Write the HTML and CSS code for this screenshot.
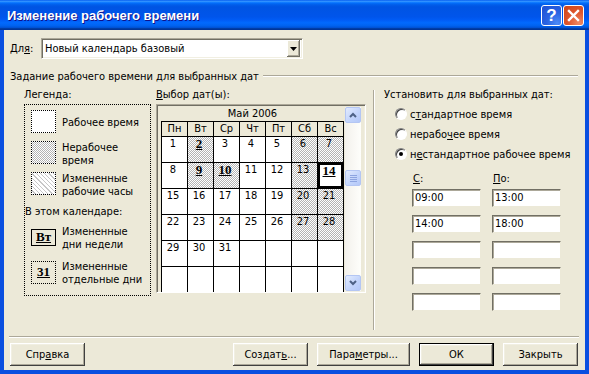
FILE: index.html
```html
<!DOCTYPE html>
<html lang="ru">
<head>
    <meta charset="UTF-8">
    <title>Изменение рабочего времени</title>
    <link rel="stylesheet" href="styles.css">
</head>
<body>
<div class="window">
    <div class="titlebar">
        <span class="title">Изменение рабочего времени</span>
        <span class="tb-btn help">?</span>
        <span class="tb-btn close">
            <svg width="13" height="13" viewBox="0 0 13 13"><path d="M2 2 L11 11 M11 2 L2 11" stroke="#fff" stroke-width="2.4" stroke-linecap="square"/></svg>
        </span>
    </div>
    <div class="content">
        <div class="for-row">
            <span class="for-label">Дл<u>я</u>:</span>
            <div class="combo">
                <span class="combo-text">Новый календарь базовый</span>
                <span class="combo-btn"><svg width="7" height="4" viewBox="0 0 7 4"><path d="M0 0 H7 L3.5 4 Z" fill="#000"/></svg></span>
            </div>
        </div>

        <div class="group-title"><span>Задание рабочего времени для выбранных дат</span><i class="line"></i></div>

        <div class="main">
            <!-- легенда -->
            <div class="legend">
                <div class="cap">Легенда:</div>
                <div class="legend-box">
                    <div class="leg-item"><span class="sw"></span><span class="leg-text">Рабочее время</span></div>
                    <div class="leg-item"><span class="sw sw-off"></span><span class="leg-text">Нерабочее<br>время</span></div>
                    <div class="leg-item"><span class="sw sw-hatch"></span><span class="leg-text">Измененные<br>рабочие часы</span></div>
                    <div class="leg-note">В этом календаре:</div>
                    <div class="leg-item leg-wd"><span class="sw sw-day">Вт</span><span class="leg-text">Измененные<br>дни недели</span></div>
                    <div class="leg-item leg-dt"><span class="sw sw-date">31</span><span class="leg-text">Измененные<br>отдельные дни</span></div>
                </div>
            </div>

            <!-- календарь -->
            <div class="calendar">
                <div class="cap"><u>В</u>ыбор дат(ы):</div>
                <div class="cal-box">
                    <div class="cal-main">
                        <div class="cal-month">Май 2006</div>
                        <div class="cal-grid">
                            <span class="dow">Пн</span><span class="dow">Вт</span><span class="dow">Ср</span><span class="dow">Чт</span><span class="dow">Пт</span><span class="dow">Сб</span><span class="dow">Вс</span>

                            <span>1</span><span class="off b">2</span><span>3</span><span>4</span><span>5</span><span class="off">6</span><span class="off">7</span>
                            <span>8</span><span class="off b">9</span><span class="off b">10</span><span>11</span><span>12</span><span class="off">13</span><span class="sel b">14</span>
                            <span>15</span><span>16</span><span>17</span><span>18</span><span>19</span><span class="off">20</span><span class="off">21</span>
                            <span>22</span><span>23</span><span>24</span><span>25</span><span>26</span><span class="off">27</span><span class="off">28</span>
                            <span>29</span><span>30</span><span>31</span><span></span><span></span><span></span><span></span>
                            <span></span><span></span><span></span><span></span><span></span><span></span><span></span>
                        </div>
                    </div>
                    <div class="scroll">
                        <span class="sb-btn"><svg width="8" height="6" viewBox="0 0 8 6"><path d="M1 5 L4 2 L7 5" fill="none" stroke="#4d6185" stroke-width="2"/></svg></span>
                        <span class="sb-thumb"><i></i><i></i><i></i><i></i></span>
                        <span class="sb-space"></span>
                        <span class="sb-btn"><svg width="8" height="6" viewBox="0 0 8 6"><path d="M1 1 L4 4 L7 1" fill="none" stroke="#4d6185" stroke-width="2"/></svg></span>
                    </div>
                </div>
            </div>

            <div class="vsep"></div>

            <!-- установить -->
            <div class="setpanel">
                <div class="set-title">Установить для выбранных дат:</div>
                <div class="radios">
                    <div class="radio"><span class="rb"></span><span>с<u>т</u>андартное время</span></div>
                    <div class="radio"><span class="rb"></span><span>нерабо<u>ч</u>ее время</span></div>
                    <div class="radio"><span class="rb on"></span><span>н<u>е</u>стандартное рабочее время</span></div>
                </div>
                <div class="times-caps">
                    <span><u>С</u>:</span><span><u>П</u>о:</span>
                </div>
                <div class="times">
                    <span class="field">09:00</span><span class="field">13:00</span>
                    <span class="field">14:00</span><span class="field">18:00</span>
                    <span class="field"></span><span class="field"></span>
                    <span class="field"></span><span class="field"></span>
                    <span class="field"></span><span class="field"></span>
                </div>
            </div>
        </div>

        <div class="hsep"></div>

        <div class="buttons">
            <button class="btn">Спр<u>а</u>вка</button>
            <span class="spacer"></span>
            <button class="btn">Создат<u>ь</u>...</button>
            <button class="btn wide">Пара<u>м</u>етры...</button>
            <button class="btn default">ОК</button>
            <button class="btn">Закрыть</button>
        </div>
    </div>
</div>
</body>
</html>
```

FILE: styles.css
```css
* {
    padding: 0;
    margin: 0;
    box-sizing: border-box;
}

body {
    width: 589px;
    height: 374px;
    overflow: hidden;
    font-family: "DejaVu Sans", "Liberation Sans", sans-serif;
    font-stretch: condensed;
    font-size: 11px;
    color: #000;
    background: #fff;
}

u {
    text-decoration: underline;
    text-underline-offset: 1px;
}

.window {
    width: 589px;
    height: 374px;
    display: flex;
    flex-direction: column;
    background: #0a4fe0;
}

/* ---------------- заголовок */
.titlebar {
    height: 30px;
    display: flex;
    align-items: center;
    padding: 1px 5px 0 7px;
    background: linear-gradient(to bottom, #0058ee 0%, #3593ff 4%, #288eff 6%, #127dff 8%, #036ffc 10%, #0262ee 14%, #0057e5 20%, #0054e3 24%, #0055eb 56%, #005bf5 66%, #026afe 76%, #0062ef 86%, #0052d6 92%, #0040ab 94%, #003092 100%);
}

.title {
    flex: 1;
    color: #fff;
    font-family: "Liberation Sans", Arial, sans-serif;
    font-stretch: normal;
    font-weight: bold;
    font-size: 13px;
    text-shadow: 1px 1px #0f1089;
}

.tb-btn {
    width: 21px;
    height: 21px;
    border: 1px solid #fff;
    border-radius: 3px;
    display: flex;
    align-items: center;
    justify-content: center;
    margin-left: 1px;
}

.help {
    background: radial-gradient(circle at 80% 90%, #4d8bf7, #2a64e3 45%, #1d4fd2);
    color: #fff;
    font-family: "Liberation Sans", Arial, sans-serif;
    font-weight: bold;
    font-size: 17px;
}

.close {
    background: radial-gradient(circle at 80% 90%, #f08a64, #e0582f 45%, #cc4418);
}

/* ---------------- тело */
.content {
    flex: 1;
    margin: 0 4px 4px;
    background: #ece9d8;
    padding: 0 7px 0 6px;
    display: flex;
    flex-direction: column;
}

.for-row {
    display: flex;
    align-items: center;
    height: 21px;
    margin-top: 8px;
}

.for-label {
    width: 31px;
}

.combo {
    width: 262px;
    height: 21px;
    display: flex;
    align-items: center;
    background: #fff;
    border: 1px solid;
    border-color: #aca899 #fff #fff #aca899;
    box-shadow: inset 1px 1px #716f64, inset -1px -1px #f1efe2;
    padding: 2px;
}

.combo-text {
    flex: 1;
    padding-left: 1px;
}

.combo-btn {
    width: 13px;
    height: 17px;
    display: flex;
    align-items: center;
    justify-content: center;
    background: #ece9d8;
    box-shadow: inset -1px -1px #716f64, inset 1px 1px #fff, inset -2px -2px #aca899;
}

.group-title {
    display: flex;
    align-items: center;
    height: 14px;
    margin-top: 10px;
}

.group-title .line {
    flex: 1;
    height: 2px;
    margin-left: 4px;
    border-top: 1px solid #aca899;
    border-bottom: 1px solid #fff;
}

.main {
    flex: 1;
    display: flex;
    padding-top: 5px;
}

.cap {
    height: 14px;
    line-height: 14px;
    margin-bottom: 2px;
}

/* ---------------- легенда */
.legend {
    width: 127px;
    margin-left: 14px;
}

.legend-box {
    height: 192px;
    border: 1px dotted #000;
    padding: 1px 0 0 6px;
}

.leg-item {
    height: 31px;
    display: flex;
    align-items: center;
}

.sw {
    width: 25px;
    height: 23px;
    flex: none;
    border: 1px dotted #000;
    background: #fff;
    margin-right: 6px;
    display: flex;
    align-items: center;
    justify-content: center;
    font-family: "Liberation Serif", "Times New Roman", serif;
    font-stretch: normal;
    font-weight: bold;
    font-size: 13px;
    text-decoration: underline;
}

.sw-off {
    background: repeating-conic-gradient(#fff 0 25%, #b4b4b4 0 50%) 0 0 / 2px 2px;
}

.sw-hatch {
    background: repeating-linear-gradient(45deg, #fff 0 2px, #c8c8c8 2px 3px);
}

.sw-day {
    height: 17px;
    border: 1px solid #000;
    background: transparent;
}

.sw-date {
    background: transparent;
}

.leg-text {
    line-height: 13px;
    padding-top: 2px;
    white-space: nowrap;
}

.leg-note {
    height: 26px;
    line-height: 26px;
    margin-left: -6px;
}

.leg-wd {
    height: 24px;
}

.leg-dt {
    height: 32px;
    margin-top: 7px;
}

/* ---------------- календарь */
.calendar {
    width: 210px;
    margin-left: 5px;
}

.cal-box {
    height: 189px;
    display: flex;
    overflow: hidden;
    border: 1px solid;
    border-color: #aca899 #fff #fff #aca899;
    box-shadow: inset 1px 1px #716f64, inset -1px -1px #f1efe2;
    padding: 1px 3px 1px 4px;
    background: #ece9d8;
}

.cal-main {
    width: 183px;
}

.cal-month {
    height: 15px;
    line-height: 15px;
    text-align: center;
}

.cal-grid {
    display: grid;
    grid-template-columns: repeat(7, 25px);
    grid-template-rows: 14px repeat(6, 25px);
    gap: 1px;
    padding: 1px;
    background: #000;
}

.cal-grid span {
    background: #fff;
    text-align: center;
    padding-right: 3px;
    line-height: 12px;
    padding-top: 1px;
}

.cal-grid .dow {
    background: #ece9d8;
    padding: 0;
    line-height: 14px;
}

.cal-grid .off {
    background: repeating-conic-gradient(#fff 0 25%, #b4b4b4 0 50%) 0 0 / 2px 2px;
}

.cal-grid .b {
    font-family: "Liberation Serif", "Times New Roman", serif;
    font-stretch: normal;
    font-weight: bold;
    font-size: 13px;
    text-decoration: underline;
}

.cal-grid .sel {
    box-shadow: inset 0 0 0 2px #000;
    padding-top: 2px;
}

.scroll {
    width: 16px;
    margin: 1px 0 0 1px;
    display: flex;
    flex-direction: column;
    background: linear-gradient(to right, #f3f1ec, #fefefb);
}

.sb-btn, .sb-thumb {
    height: 16px;
    flex: none;
    border: 1px solid #b4c6f3;
    border-radius: 2px;
    background: linear-gradient(135deg, #e2ebfe, #c1d3fb 60%, #b4c8f8);
    display: flex;
    align-items: center;
    justify-content: center;
}

.sb-thumb {
    margin-top: 47px;
    flex-direction: column;
    gap: 1px;
}

.sb-thumb i {
    width: 7px;
    height: 1px;
    background: #8da4e0;
}

.sb-space {
    flex: 1;
}

/* ---------------- правая часть */
.vsep {
    width: 2px;
    margin: 2px 0 4px 7px;
    border-left: 1px solid #aca899;
    border-right: 1px solid #fff;
}

.setpanel {
    flex: 1;
    padding-left: 9px;
}

.set-title {
    height: 14px;
    line-height: 14px;
}

.radios {
    margin: 2px 0 0 11px;
}

.radio {
    height: 20px;
    display: flex;
    align-items: center;
    white-space: nowrap;
}

.rb {
    width: 12px;
    height: 12px;
    margin-right: 3px;
    border-radius: 50%;
    background: #fff;
    border: 1px solid;
    border-color: #808080 #fff #fff #808080;
    box-shadow: inset 1px 1px #404040;
    display: flex;
    align-items: center;
    justify-content: center;
}

.rb.on::after {
    content: "";
    width: 4px;
    height: 4px;
    border-radius: 50%;
    background: #000;
}

.times-caps {
    display: flex;
    gap: 11px;
    margin: 8px 0 0 29px;
    height: 14px;
    line-height: 14px;
}

.times-caps span {
    width: 69px;
}

.times {
    display: grid;
    grid-template-columns: 69px 69px;
    grid-auto-rows: 18px;
    column-gap: 11px;
    row-gap: 8px;
    margin: 3px 0 0 28px;
}

.field {
    background: #fff;
    border: 1px solid;
    border-color: #716f64 #ece9d8 #ece9d8 #716f64;
    box-shadow: inset 1px 1px #aca899;
    line-height: 15px;
    padding-left: 2px;
}

/* ---------------- кнопки */
.hsep {
    height: 2px;
    margin: 2px -1px 5px;
    border-top: 1px solid #aca899;
    border-bottom: 1px solid #fff;
}

.buttons {
    display: flex;
    gap: 9px;
    height: 23px;
    margin-bottom: 4px;
}

.spacer {
    flex: 1;
}

.btn {
    width: 75px;
    height: 23px;
    font: inherit;
    color: #000;
    background: #ece9d8;
    border: none;
    box-shadow: inset -1px -1px #404040, inset 1px 1px #fff, inset -2px -2px #aca899, inset 2px 2px #f1efe2;
}

.btn.wide {
    width: 93px;
}

.btn.default {
    border: 1px solid #000;
}
```
